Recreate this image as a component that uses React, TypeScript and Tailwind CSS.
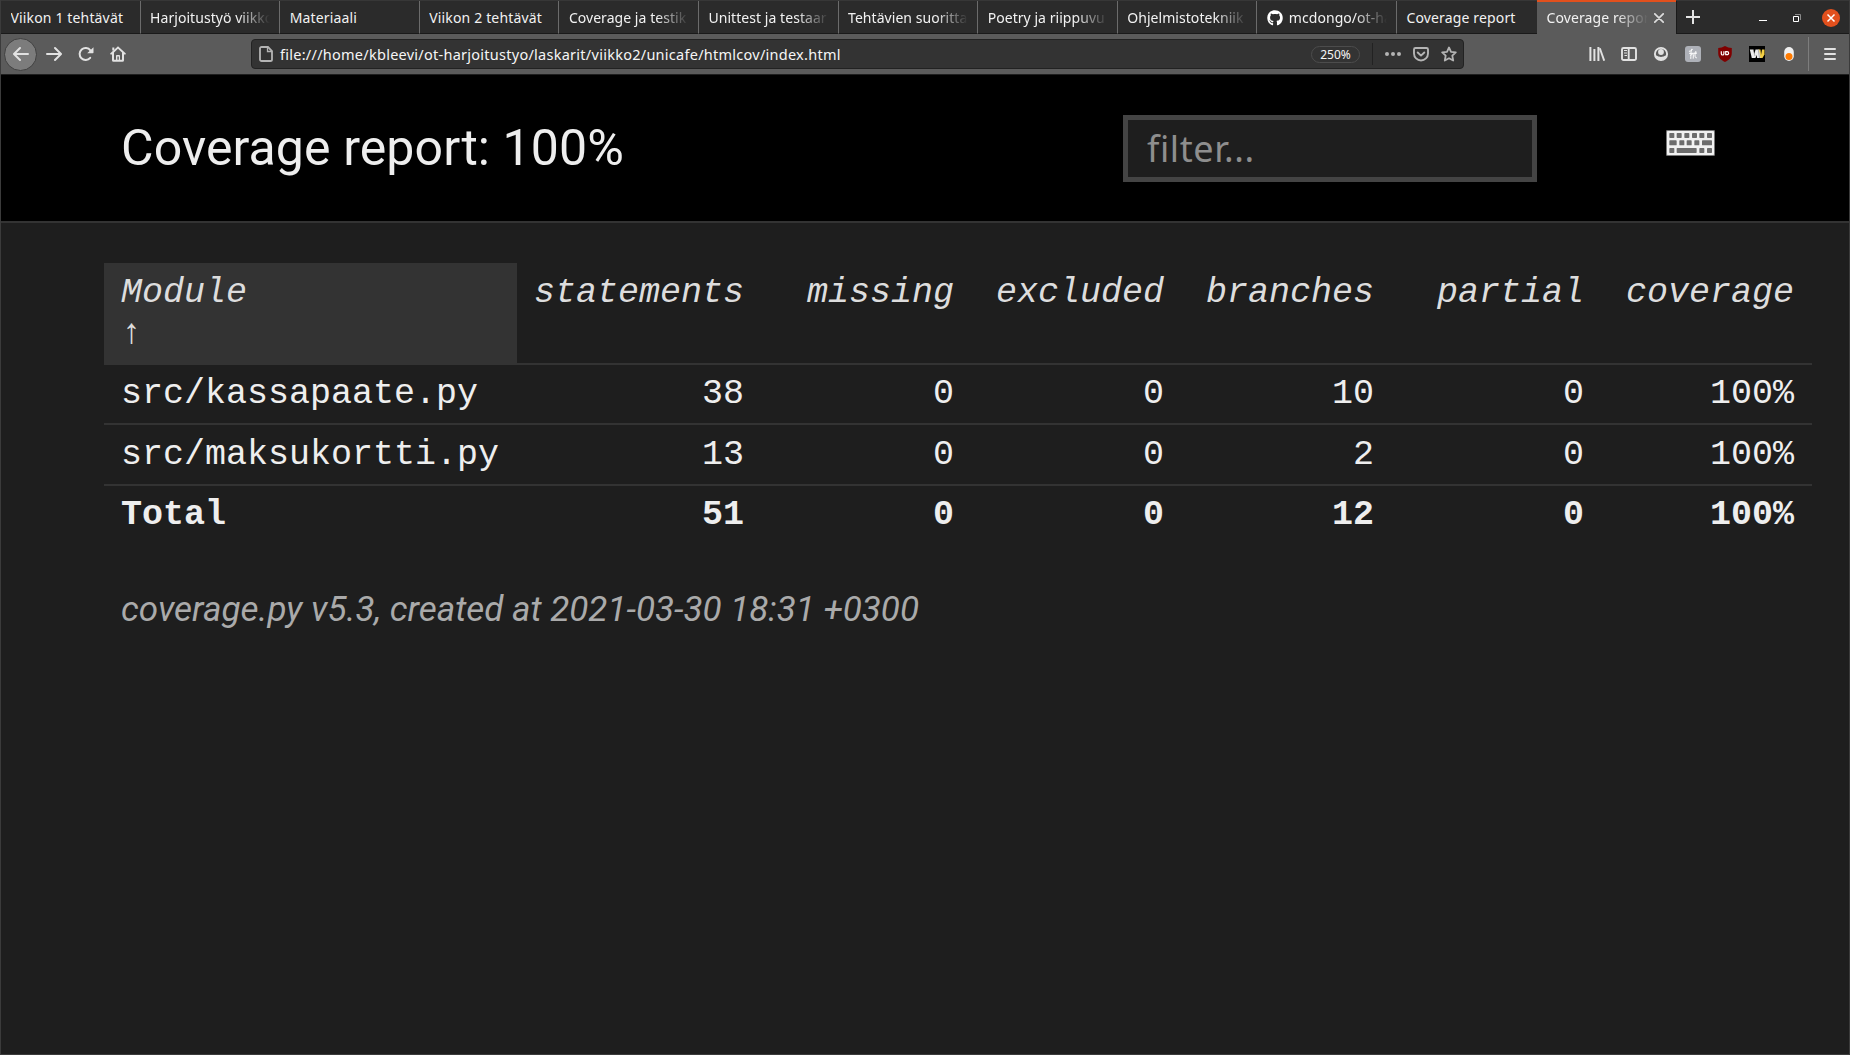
import type { ReactNode } from "react";
import { FaGithub } from "react-icons/fa";

const tabs = [
  { title: "Viikon 1 tehtävät" },
  { title: "Harjoitustyö viikko", faded: true },
  { title: "Materiaali" },
  { title: "Viikon 2 tehtävät" },
  { title: "Coverage ja testik", faded: true },
  { title: "Unittest ja testaar", faded: true },
  { title: "Tehtävien suoritta", faded: true },
  { title: "Poetry ja riippuvu", faded: true },
  { title: "Ohjelmistotekniik", faded: true },
  { title: "mcdongo/ot-ha", faded: true, github: true },
  { title: "Coverage report" },
];

const columns = ["statements", "missing", "excluded", "branches", "partial", "coverage"];

const rows = [
  { name: "src/kassapaate.py", cell: "h-[60px] pt-[8px]", values: ["38", "0", "0", "10", "0", "100%"] },
  { name: "src/maksukortti.py", cell: "h-[61px] pt-[9px]", values: ["13", "0", "0", "2", "0", "100%"] },
];

const total = ["51", "0", "0", "12", "0", "100%"];

const fade = "[mask-image:linear-gradient(to_left,transparent,black_32px)]";

function Icon({ children, className = "" }: { children: ReactNode; className?: string }) {
  return (
    <svg viewBox="0 0 16 16" className={`size-4 shrink-0 ${className}`} fill="currentColor">
      {children}
    </svg>
  );
}

const ARROW =
  "M15 7H3.414l4.293-4.293a1 1 0 0 0-1.414-1.414l-6 6a1 1 0 0 0 0 1.414l6 6a1 1 0 0 0 1.414-1.414L3.414 9H15a1 1 0 0 0 0-2z";

function TabBar() {
  return (
    <div className="flex h-[34px] border-t border-[#373737] bg-[#2b2b2b] text-[14px] text-[#f2f2f2]">
      {tabs.map((tab, i) => (
        <div
          key={i}
          className={`flex w-[139.6px] shrink-0 items-center gap-[6px] border-b border-b-[#1a1a1a] pl-[9.5px] pr-[9px] pt-[2px] ${
            i < tabs.length - 1 ? "border-r border-r-[#6b6b6b]" : ""
          }`}
        >
          {tab.github && <FaGithub className="-mt-px size-4 shrink-0 text-white" />}
          <span
            className={`min-w-0 flex-1 overflow-hidden whitespace-nowrap leading-5 ${
              tab.faded ? `${fade} tracking-[0.05px]` : "tracking-[0.15px]"
            }`}
          >
            {tab.title}
          </span>
        </div>
      ))}
      <div className="-mt-px flex w-[139.4px] shrink-0 items-center border-t-2 border-[#e2501d] bg-[#5b5b5b] pl-[10px] pr-[12px]">
        <span className={`min-w-0 flex-1 overflow-hidden whitespace-nowrap leading-5 tracking-[0.1px] ${fade}`}>
          Coverage report
        </span>
        <svg viewBox="0 0 10 10" className="ml-[6px] size-[10px] shrink-0">
          <path d="M.8.8l8.4 8.4M9.2.8L.8 9.2" stroke="#dcdcdc" strokeWidth="1.7" strokeLinecap="round" />
        </svg>
      </div>
      <div className="flex flex-1 items-center border-b border-l border-[#1a1a1a] pl-[9px] pr-[9px]">
        <svg viewBox="0 0 14 14" className="size-[14px]">
          <path d="M7 .5v13M.5 7h13" stroke="#e4e4e4" strokeWidth="2" strokeLinecap="round" />
        </svg>
        <div className="ml-auto flex items-center">
          <svg viewBox="0 0 8 8" className="mr-[26px] mt-[2px] size-2">
            <path d="M0 6.5h8" stroke="#fff" strokeWidth="1" />
          </svg>
          <svg viewBox="0 0 8 8" className="mr-[21px] mt-px size-2" fill="none">
            <path d="M.5 2.5h5v5h-5z" stroke="#fff" />
            <path d="M2 .5h5.5V6" stroke="#8a8a8a" />
          </svg>
          <svg viewBox="0 0 18 18" className="mt-px size-[18px]">
            <circle cx="9" cy="9" r="9" fill="#e2501d" />
            <path d="M5.5 5.5l7 7M12.5 5.5l-7 7" stroke="#fff" strokeWidth="1.5" />
          </svg>
        </div>
      </div>
    </div>
  );
}

function NavBar() {
  return (
    <div className="flex h-[41px] items-center border-b border-[#1f1f1f] bg-[#5b5b5b] pl-[3px] text-[#e2e2e2]">
      <div className="flex size-[33px] items-center justify-center rounded-full border border-[#414141] bg-[#7c7c7c]">
        <Icon>
          <path d={ARROW} />
        </Icon>
      </div>
      <Icon className="ml-[9px] -scale-x-100">
        <path d={ARROW} />
      </Icon>
      <Icon className="ml-4">
        <path d="M12.2 11.8A6 6 0 1 1 12.4 4.3" fill="none" stroke="currentColor" strokeWidth="2" strokeLinecap="round" />
        <path d="M15.5 1.2v5.3a.7.7 0 0 1-.7.7H9.2z" />
      </Icon>
      <Icon className="ml-4">
        <path
          fillRule="evenodd"
          d="M8 .2l7.6 7.1c.7.7-.2 1.8-1.1 1.3L14 8.2V14a1.6 1.6 0 0 1-1.6 1.7H3.6A1.6 1.6 0 0 1 2 14V8.2l-.5.4C.6 9.1-.3 8 .4 7.3zM8 2.7L4 6.4v7.3h2V9.8A.8.8 0 0 1 6.8 9h2.4a.8.8 0 0 1 .8.8v3.9h2V6.4zM8.8 10.5v3.2H7.4v-3.2z"
        />
        <path d="M2.3 1.5h2v3h-2z" />
      </Icon>

      <div className="ml-[125px] flex h-[30px] w-[1213px] items-center rounded border border-[#222] bg-[#333] text-[#b4b4b4]">
        <svg viewBox="0 0 14 16" className="ml-[7px] h-4 w-[14px]" fill="none" stroke="currentColor" strokeWidth="1.8">
          <path d="M2.6 1H9l4 4v8.4A1.6 1.6 0 0 1 11.4 15H2.6A1.6 1.6 0 0 1 1 13.4V2.6A1.6 1.6 0 0 1 2.6 1z" />
          <path d="M8.5 1v4.5H13" strokeWidth="1.3" />
        </svg>
        <span className="ml-[7px] text-[14.5px] leading-5 tracking-[0.26px] text-[#f6f6f6]">
          file:///home/kbleevi/ot-harjoitustyo/laskarit/viikko2/unicafe/htmlcov/index.html
        </span>
        <span className="ml-auto flex h-[17px] w-[49px] items-center justify-center rounded-full border border-[#4c4c4c] pt-px text-[12px] leading-none text-[#f6f6f6]">
          250%
        </span>
        <span className="ml-3 h-[22px] w-px bg-[#222]" />
        <Icon className="ml-3">
          <circle cx="2" cy="8" r="2" />
          <circle cx="8" cy="8" r="2" />
          <circle cx="14" cy="8" r="2" />
        </Icon>
        <Icon className="ml-3">
          <path
            d="M2.5 2h11A1.5 1.5 0 0 1 15 3.5V7.5a7 7 0 0 1-14 0V3.5A1.5 1.5 0 0 1 2.5 2z"
            fill="none"
            stroke="currentColor"
            strokeWidth="1.9"
          />
          <path
            d="M4.7 6.5L8 9.6l3.3-3.1"
            fill="none"
            stroke="currentColor"
            strokeWidth="1.9"
            strokeLinecap="round"
            strokeLinejoin="round"
          />
        </Icon>
        <Icon className="ml-3 mr-[6px]">
          <path
            d="M8 1.5l2 4.3 4.8.6-3.5 3.3.9 4.8L8 12.2l-4.2 2.300.9-4.800L1.200 6.400 6 5.800z"
            fill="none"
            stroke="currentColor"
            strokeWidth="1.8"
            strokeLinejoin="round"
          />
        </Icon>
      </div>

      <div className="ml-auto flex items-center gap-4 pr-[13px]">
        <Icon>
          <path d="M1 1h2v14H1zM5 3h2v12H5zM9 1h2v14H9z" transform="translate(-.6 0)" />
          <path d="M10.8 2.3l4.4 12.4" stroke="currentColor" strokeWidth="1.9" />
        </Icon>
        <Icon>
          <path
            d="M2.5 2h11A1.5 1.5 0 0 1 15 3.5v9a1.5 1.5 0 0 1-1.5 1.5h-11A1.5 1.5 0 0 1 1 12.5v-9A1.5 1.5 0 0 1 2.5 2zM7.7 2v12"
            fill="none"
            stroke="currentColor"
            strokeWidth="1.9"
          />
          <path d="M3 4.5h3M3 7h3M3.5 9.5H6" stroke="currentColor" strokeWidth="1.1" />
        </Icon>
        <Icon>
          <circle cx="8" cy="8" r="6.1" fill="none" stroke="currentColor" strokeWidth="1.9" />
          <circle cx="8" cy="6" r="2.9" />
          <path d="M2.5 9.6c1.3-.7 2.2.6 3.4 1 1.4.5 2.8.5 4.2 0 1.2-.4 2.1-1.7 3.4-1L12.7 12 8 14.5 3.3 12z" />
        </Icon>
        <Icon>
          <rect width="16" height="16" rx="3" fill="#aeb1b8" />
          <path
            d="M4.3 5.3C6.5 5 7.7 3.6 7.2 3c-.8-.6-1.3 1.5-1.4 9.5M5.8 9.3c.8-1.8 2.6-1.8 2.5-.3l-.1 3.3M4.500 7.300h7M10.500 7.300c.7-.5.9-1.500.5-1.800-.8-.2-1 1.500-1 3.500 0 2 .6 3.600 1.700 2.700"
            fill="none"
            stroke="#fff"
            strokeWidth="1"
            strokeLinecap="round"
          />
        </Icon>
        <Icon>
          <path
            d="M8 0c2.3 1.3 4.3 1.8 6.8 2v5c0 4.5-2.5 6.9-6.8 9-4.3-2.1-6.8-4.5-6.8-9V2C3.7 1.8 5.7 1.3 8 0z"
            fill="#800000"
          />
          <path
            d="M4.3 5.2v2.5a1.3 1.3 0 0 0 2.6 0V5.2M8.7 5.6v3.1h1.400a1.550 1.550 0 0 0 0-3.100z"
            fill="none"
            stroke="#fff"
            strokeWidth="1.2"
          />
        </Icon>
        <Icon>
          <path d="M0 0h16v16H0z" fill="#000" />
          <path d="M9.5 3.5h2l1 8.5H11z" fill="#e9c43a" />
          <path d="M13 3.5h2.5v5L13.5 12h-2z" fill="#f3cf45" />
          <path d="M.8 3.5h3.5L5.5 8l1-4.5h3.7L11.5 12H8.2L7.5 9l-1 3H2.8z" fill="#ececec" />
          <path d="M4.2 3.5L6 10M9.3 4l1.2 8" stroke="#888" strokeWidth=".6" />
        </Icon>
        <Icon>
          <rect x="3.2" y="1" width="9.6" height="14" rx="4.8" fill="#f0f0f0" />
          <circle cx="8" cy="10.5" r="3.5" fill="#ff7b00" />
        </Icon>
        <span className="-ml-[5px] h-[34px] w-px bg-[#7d7d7d]" />
        <svg viewBox="0 0 12 12" className="-ml-px size-3">
          <path d="M1 1h10M1 6h10M1 11h10" stroke="currentColor" strokeWidth="2" strokeLinecap="round" />
        </svg>
      </div>
    </div>
  );
}

function KeyboardIcon() {
  const keys = [
    [10, 9, 15], [32, 9, 15], [55, 9, 15], [78, 9, 15], [100, 9, 15], [123, 9, 15],
    [10, 31, 22], [40, 31, 15], [62, 31, 15], [85, 31, 15], [108, 31, 30],
    [10, 54, 15], [32, 54, 60], [100, 54, 15], [123, 54, 15],
  ];
  return (
    <svg viewBox="0 0 147 78" className="h-[26px] w-[49px]">
      <rect width="147" height="78" rx="4" fill="#777" />
      <rect x="3" y="3" width="141" height="72" rx="2" fill="#f1f1f1" />
      {keys.map(([x, y, w], i) => (
        <rect key={i} x={x} y={y} width={w} height="15" rx="2" fill="#6c6c6c" />
      ))}
    </svg>
  );
}

function ReportHeader() {
  return (
    <header className="flex h-[148px] items-start border-b-2 border-[#333] bg-black pl-[120px] pr-[134px] pt-10">
      <h1 className="mt-[3px] font-[Roboto,sans-serif] text-[50px] leading-[60px] tracking-[0.1px] text-[#eee]">
        Coverage report: 100%
      </h1>
      <div className="ml-auto flex h-[67px] w-[414px] items-center border-[5px] border-[#444] bg-[#1e1e1e] pl-[19px] text-[36px] leading-[50px] tracking-[0.6px] text-[#8e8e8e]">
        filter...
      </div>
      <div className="ml-[129px] mt-[15px]">
        <KeyboardIcon />
      </div>
    </header>
  );
}

function CoverageTable() {
  return (
    <table className="ml-[103px] mt-10 w-[1708px] table-fixed border-separate border-spacing-0 font-['Liberation_Mono',monospace] text-[35px] leading-[42px] text-[#eee]">
      <colgroup>
        <col className="w-[413px]" />
        <col className="w-[245px]" />
        <col span={5} className="w-[210px]" />
      </colgroup>
      <thead>
        <tr className="leading-[41px] text-[#ddd] italic">
          <th className="h-[102px] border-b-2 border-[#333] bg-[#333] pt-[10px] pl-[17px] pr-4 text-left align-top font-normal">
            Module
            <br />↑
          </th>
          {columns.map((c) => (
            <th key={c} className="border-b-2 border-[#333] pt-[10px] pr-[18px] text-right align-top font-normal">
              {c}
            </th>
          ))}
        </tr>
      </thead>
      <tbody>
        {rows.map((r) => (
          <tr key={r.name}>
            <td className={`border-b-2 border-[#333] pl-[17px] align-top ${r.cell}`}>{r.name}</td>
            {r.values.map((v, i) => (
              <td key={i} className={`border-b-2 border-[#333] pr-[18px] text-right align-top ${r.cell}`}>
                {v}
              </td>
            ))}
          </tr>
        ))}
        <tr className="font-bold">
          <td className="h-[60px] pl-[17px] pt-[8px] align-top">Total</td>
          {total.map((v, i) => (
            <td key={i} className="pr-[18px] pt-[8px] text-right align-top">
              {v}
            </td>
          ))}
        </tr>
      </tbody>
    </table>
  );
}

export default function App() {
  return (
    <div className="h-[1055px] w-[1850px] overflow-hidden border-x border-b border-[#3b3b3b] bg-[#1e1e1e] font-['Noto_Sans',sans-serif]">
      <TabBar />
      <NavBar />
      <ReportHeader />
      <CoverageTable />
      <footer className="ml-[120px] mt-[41px] font-[Roboto,sans-serif] text-[35px] italic leading-[46px] text-[#aaa]">
        coverage.py v5.3, created at 2021-03-30 18:31 +0300
      </footer>
    </div>
  );
}
